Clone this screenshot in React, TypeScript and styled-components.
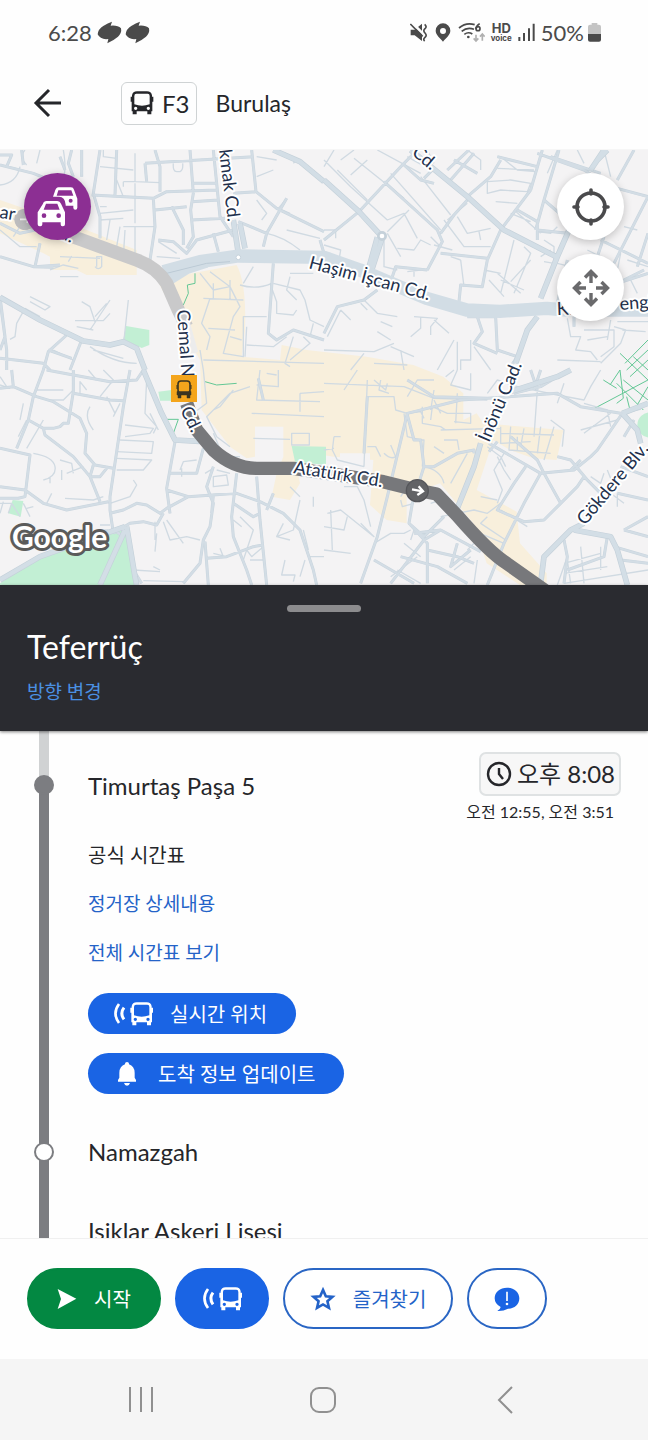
import React from "react";
import styled, { createGlobalStyle } from "styled-components";

const GlobalStyle = createGlobalStyle`
  * { box-sizing: border-box; }
  body { margin: 0; background: #fefefe; }
  button { font-family: inherit; cursor: pointer; }
`;

const blue = "#1a64e4";
const ink = "#25262a";
const rail = "#7c7d81";

const Screen = styled.div`
  display: flex;
  flex-direction: column;
  height: 100vh;
  color: ${ink};
  background: #fefefe;
  font-family: "Lato", "Noto Sans CJK KR", sans-serif;
`;

/* ---------- status bar ---------- */

const StatusBar = styled.div`
  display: flex;
  align-items: center;
  justify-content: space-between;
  flex: none;
  height: 65px;
  padding: 0 47px 0 48px;
  color: #4b4b4b;
  font-size: 22px;
  line-height: 28px;
`;

const StatusGroup = styled.div<{ $gap: number }>`
  display: flex;
  align-items: center;
  gap: ${(p) => p.$gap}px;
`;

const Battery = styled.span`
  display: flex;
  align-items: center;
  gap: 4px;
`;

const HdVoice = styled.span`
  display: flex;
  flex-direction: column;
  align-items: center;
  font-family: "Inter", sans-serif;
  font-weight: 700;
  font-size: 13px;
  line-height: 11px;
  small {
    font-size: 8px;
    line-height: 8px;
  }
`;

/* ---------- app bar ---------- */

const AppBar = styled.header`
  display: flex;
  align-items: center;
  flex: none;
  height: 85px;
  padding: 0 33px 8px;
  border-bottom: 1px solid #f6f6f6;
`;

const IconButton = styled.button`
  display: flex;
  padding: 0;
  border: 0;
  color: ${ink};
  background: none;
`;

const LineBadge = styled.span`
  display: flex;
  align-items: center;
  gap: 7px;
  height: 43px;
  margin: 0 19px 0 58px;
  padding: 0 6px 0 7px;
  border: 1px solid #cfd3d4;
  border-radius: 6px;
  font-size: 24px;
`;

const Operator = styled.h1`
  margin: 0;
  font-size: 23px;
  font-weight: 400;
  line-height: 28px;
`;

/* ---------- map ---------- */

const MapArea = styled.section`
  position: relative;
  flex: none;
  height: 435px;
  overflow: hidden;
  background: #f4f3f4;
`;

const MapDrawing = styled.svg`
  display: block;
  width: 100%;
  height: 100%;
`;

const MapButton = styled.button<{ $dark?: boolean }>`
  display: flex;
  align-items: center;
  justify-content: center;
  width: 67px;
  height: 67px;
  padding: 0;
  border: 0;
  border-radius: 50%;
  color: ${(p) => (p.$dark ? "#ffffff" : "#4a4a4c")};
  background: ${(p) => (p.$dark ? "#8c2f93" : "#ffffff")};
  box-shadow: 0 2px 8px rgba(0, 0, 0, 0.22);
`;

const MapControls = styled.div<{ $side: "left" | "right" }>`
  position: absolute;
  top: 23px;
  ${(p) => p.$side}: 24px;
  display: flex;
  flex-direction: column;
  gap: 14px;
`;

const MapLabel = styled.text`
  font-size: 18px;
  fill: #22304c;
  stroke: #ffffff;
  stroke-width: 4px;
  stroke-linejoin: round;
  paint-order: stroke;
`;

const Attribution = styled.text`
  font-size: 30px;
  font-weight: 700;
  fill: #ffffff;
  stroke: #5b5b5b;
  stroke-width: 6px;
  stroke-linejoin: round;
  paint-order: stroke;
`;

/* ---------- direction panel ---------- */

const DirectionPanel = styled.section`
  position: relative;
  z-index: 1;
  display: flex;
  flex-direction: column;
  align-items: flex-start;
  flex: none;
  height: 146px;
  padding: 20px 27px 0;
  background: #2a2b30;
  box-shadow: 0 1px 3px rgba(0, 0, 0, 0.5);
`;

const Handle = styled.div`
  align-self: center;
  width: 74px;
  height: 7px;
  border-radius: 4px;
  background: #8c8c8e;
`;

const Direction = styled.h2`
  margin: 17px 0 0;
  color: #ffffff;
  font-size: 32px;
  font-weight: 400;
  line-height: 36px;
`;

const TextLink = styled.a<{ $light?: boolean }>`
  color: ${(p) => (p.$light ? "#4a90e2" : "#2463c8")};
  font-size: 19px;
  line-height: 28px;
  text-decoration: none;
`;

const DirectionLink = styled(TextLink)`
  margin-top: 13px;
`;

/* ---------- stops ---------- */

const StopList = styled.ol`
  flex: 1;
  min-height: 0;
  margin: 0;
  padding: 0;
  overflow: auto;
  scrollbar-width: none;
  list-style: none;
`;

const Stop = styled.li`
  display: grid;
  grid-template-columns: 88px 1fr;
`;

const Rail = styled.div`
  display: flex;
  flex-direction: column;
  align-items: center;
`;

const Segment = styled.i<{ $length?: number; $past?: boolean }>`
  flex: ${(p) => (p.$length ? `0 0 ${p.$length}px` : "1")};
  width: 10px;
  background: ${(p) => (p.$past ? "#d0d2d3" : rail)};
`;

const Dot = styled.i<{ $open?: boolean }>`
  z-index: 1;
  flex: none;
  width: 20px;
  height: 20px;
  margin: -2px 0;
  border: 2px solid ${rail};
  border-radius: 50%;
  background: ${(p) => (p.$open ? "#ffffff" : rail)};
`;

const StopBody = styled.div<{ $open?: boolean }>`
  display: flex;
  flex-direction: column;
  align-items: flex-start;
  min-height: 79px;
  padding: ${(p) => (p.$open ? "21px 27px 19px 0" : "25px 27px 24px 0")};
`;

const StopHeader = styled.div`
  display: flex;
  justify-content: space-between;
  align-self: stretch;
`;

const StopName = styled.h3<{ $open?: boolean }>`
  margin: ${(p) => (p.$open ? "20px 0 0" : "0")};
  font-size: 24px;
  font-weight: 400;
  line-height: 28px;
`;

const Times = styled.div`
  display: flex;
  flex-direction: column;
  align-items: flex-end;
`;

const NextTime = styled.time`
  display: flex;
  align-items: center;
  gap: 5px;
  height: 44px;
  padding: 0 4px 0 5px;
  border: 2px solid #dfe2e3;
  border-radius: 7px;
  background: #f7f7f7;
  font-size: 24px;
  line-height: 36px;
`;

const LaterTimes = styled.span`
  padding-right: 7px;
  font-size: 16px;
  line-height: 31px;
`;

const StopLinks = styled.div`
  display: flex;
  flex-direction: column;
  gap: 21px;
  margin: 14px 0 26px;
  font-size: 20px;
  line-height: 28px;
`;

const Pill = styled.button`
  display: flex;
  align-items: center;
  gap: 16px;
  height: 41px;
  padding: 0 29px 0 24px;
  border: 0;
  border-radius: 21px;
  color: #ffffff;
  background: ${blue};
  font-size: 20px;
  line-height: 28px;

  & + & {
    margin-top: 19px;
  }
`;

/* ---------- action bar ---------- */

const ActionBar = styled.footer`
  display: flex;
  gap: 14px;
  flex: none;
  padding: 29px 27px 30px;
  border-top: 1px solid #f0f0f0;
  background: #fefefe;
`;

const Action = styled.button<{ $tone: "go" | "solid" | "outline"; $pad: number }>`
  display: flex;
  align-items: center;
  gap: 17px;
  height: 61px;
  padding: 0 ${(p) => p.$pad}px;
  border: 2px solid ${(p) => (p.$tone === "go" ? "#038842" : p.$tone === "solid" ? blue : "#2a66c4")};
  border-radius: 31px;
  color: ${(p) => (p.$tone === "outline" ? "#2463c8" : "#ffffff")};
  background: ${(p) => (p.$tone === "go" ? "#038842" : p.$tone === "solid" ? blue : "#ffffff")};
  font-size: 20px;
  line-height: 28px;
`;

const SystemNav = styled.nav`
  display: grid;
  grid-template-columns: repeat(3, 1fr);
  flex: none;
  height: 81px;
  padding: 0 52px 0 50px;
  background: #f5f5f5;
`;

const NavButton = styled.button`
  display: flex;
  align-items: center;
  justify-content: center;
  padding: 0;
  border: 0;
  color: #909090;
  background: none;
`;

/* ---------- icons ---------- */

const busShape =
  "M24 4H54Q67 4 69 16V20H73V35H70V64H67V73H55V64H23V73H11V64H8V35H5V20H9V16Q11 4 24 4ZM22 11Q16 11 16 18V43Q39 51 62 43V18Q62 11 56 11ZM20 50A5 5 0 1 0 20 60A5 5 0 1 0 20 50ZM58 50A5 5 0 1 0 58 60A5 5 0 1 0 58 50Z";

const BusIcon = () => (
  <svg width="26" height="26" viewBox="0 0 78 78" fill="currentColor" aria-hidden="true">
    <path fillRule="evenodd" d={busShape} />
  </svg>
);

const LiveBusIcon = () => (
  <svg width="42" height="26" viewBox="0 0 126 78" aria-hidden="true">
    <g fill="none" stroke="currentColor">
      <path d="M21 9Q0 37 21 66" strokeWidth="8" />
      <path d="M36 20Q23 37 36 55" strokeWidth="9" />
    </g>
    <path transform="translate(50 0)" fillRule="evenodd" fill="currentColor" d={busShape} />
  </svg>
);

const BellIcon = () => (
  <svg width="30" height="26" viewBox="-3 0 90 78" fill="currentColor" aria-hidden="true">
    <path d="M36 8Q36 3 42 3T48 8V10Q64 15 65 35V50L69 57V62H15V57L19 50V35Q20 15 36 10Z" />
    <path d="M33 66H51Q49 74 42 74T33 66Z" />
  </svg>
);

const LeafIcon = () => (
  <svg width="25" height="24" viewBox="0 0 75 72" fill="#4a4a4a" aria-hidden="true">
    <path d="M2 40Q3 24 20 14Q32 7 45 2L41 14Q62 12 72 22Q75 36 63 47Q50 58 31 67L34 54Q10 57 2 40Z" />
  </svg>
);

const CarsIcon = () => (
  <svg width="42" height="42" viewBox="0 0 126 126" aria-hidden="true">
    <g fill="currentColor">
      <path fillRule="evenodd" d="M53 18Q56 4 65 4H102Q109 4 111 11L121 38V65Q121 71 115 71T109 65V59H86V56Q84 42 80 38Q75 32 66 32H48ZM64 13L59 29H109L103 13ZM101 38A6 6 0 1 0 101 50A6 6 0 1 0 101 38Z" />
      <path fillRule="evenodd" d="M18 53Q20 45 29 45H61Q69 45 72 53L84 79V115Q84 121 78 121H76Q71 121 71 115V109H16V115Q16 121 10 121H8Q2 121 2 115V79ZM27 53L20 71H68L61 53ZM21 82A7 7 0 1 0 21 96A7 7 0 1 0 21 82ZM65 82A7 7 0 1 0 65 96A7 7 0 1 0 65 82Z" />
    </g>
  </svg>
);

/* ---------- map data, drawn on a grid three times finer than the view ---------- */

type Roads = { x: number; y: number; thin: string; mid: string; wide: string };

const quarters: Roads[] = [
  {
    x: 0,
    y: 0,
    thin:
      "M60 50Q50 100 0 105M75 0Q55 20 80 45M120 0L110 40M190 0Q200 60 190 80M310 0V20L350 25M300 50L400 60M350 90L370 140M405 10V95L480 98M370 95H405M370 95V110M520 40Q518 65 530 65H540Q550 60 548 40M405 100V220M300 190L400 180M300 170H320M300 210L370 205M330 210L320 270M370 230L465 230M405 230V320M360 230L350 290M375 240L370 320M475 275L530 310M470 320L540 325M770 20L830 30M820 60L770 80M890 30L880 40M770 150L800 190L785 210M835 175L870 190M860 145L835 175M800 250Q850 260 900 300M860 240L960 265M0 190L60 215M0 240L60 290L110 290M60 230L40 260M180 320L300 325M150 360L190 345L235 355M180 380H235M290 350V320H305V350Q295 362 285 350M215 318L205 335M90 440L150 470L135 480L90 455M245 455L270 470L285 515M225 512H310L330 490M330 450L270 540M285 500L320 460M230 530L280 540M385 450L372 570M75 475L50 520L45 560L30 568M120 500L75 475M150 520L190 550M600 370L640 420L690 410L630 365M640 400V445M690 390V450M610 445L730 450M630 445L605 520L630 560L620 600M690 410L720 470L700 500L670 610L730 620V500H800M625 535L705 540M690 560L725 570M610 630L972 640M600 600L610 660M720 405Q770 420 815 400M760 350L730 400M820 400L900 420L915 450L930 510L972 530M870 380L860 420L890 450M870 370L940 370M810 400L830 455V490L880 495L890 480M940 520L930 560M740 585L820 590L860 560M740 530L735 620M880 560L855 640L870 650M910 560L930 580L870 630M270 590Q340 640 410 640M280 600L370 625M160 600L220 630",
    mid:
      "M0 45L100 70L150 90L215 120M20 50L35 15H0M215 0L205 40L220 80M65 0L70 45M180 20L195 60M245 0V80M300 0L280 130L300 200V265M350 0L345 135M465 0L480 50V125M435 40L760 20M435 40L440 95M275 135L460 145L500 125L650 120M460 145L465 230L450 330M570 0L580 130L572 180L580 260L560 295M580 100H650M575 155L655 150M575 210L675 205M640 0L660 200L700 260M465 180L560 170M515 170L550 240V285M475 270L520 275L560 310L590 270L700 240M640 250L655 305M755 0L768 125L830 175L972 245M860 145L800 250L790 290M715 215L800 250M700 130L768 125M0 220L60 250L130 235M0 320L100 350L160 352M120 280L105 350L180 345M0 440L15 560L0 600M0 450L20 600V660M820 340L805 550L830 570L880 540L972 570M200 555L145 605L130 660M245 570L210 660M145 600L215 625M0 625L130 640L150 660M960 270L972 310",
    wide: "M0 442L120 510L250 573L330 585L370 575L410 595L435 660M820 0L900 35L972 95M700 210L715 310M720 220L735 295",
  },
  {
    x: 972,
    y: 0,
    thin:
      "M30 0L0 50M90 25L240 145M130 30L80 75M160 0L290 70M0 30L80 110L190 210M40 60L130 150M250 20L320 60M190 210L240 190L280 265M290 80L380 195M255 180L190 245M200 70L350 240M430 160L370 210M400 200L430 250L500 235M465 245L470 270M360 210L420 290L500 290M330 285L385 300M430 0L470 30V60M310 0L330 40M190 250L230 320M180 265V350L220 360M220 295L270 300L290 270L320 285M0 285L50 300L45 330M0 310H20M0 240H35V265M50 30L90 0M530 20L580 60L635 65M520 55L630 60M490 95L560 90L620 100L610 125L530 120L490 130ZM515 155L580 160M570 180L650 250M560 190L620 215M640 245L680 250L700 230M660 270L690 290V340L660 335M680 300L650 320M570 270L530 430M600 290L620 310L570 430M520 370L590 430M495 390L540 440M530 390L600 420M480 360L530 370M620 330L560 395M700 0L670 70M760 0L780 40M840 0L860 80M700 340L740 350M790 300L830 320M900 230L940 240M890 310L880 360M910 330L972 350M920 390L940 430M250 365L290 360M270 365V380M320 260L350 290M410 330L420 410M380 320L410 330M10 560L50 480M50 480L80 510M120 450L160 490L220 500M130 480L110 460M170 515L205 530M160 545L200 570M0 600L150 605L210 580M200 590L270 620M230 600L240 660M150 640L250 645M80 660L120 610M290 500V535L260 560M270 500L340 505L320 530V555M330 510L375 550M390 570L340 660M400 575V660M440 570V630H410V660M450 590L500 660M730 505L740 560H770L755 600L800 605L820 630M780 540H870V590L830 620M860 510L850 570M790 570L850 560M880 515H972M870 530L905 540L890 580L830 640M895 540L965 545M700 630L830 635",
    mid:
      "M0 270L105 185L235 45L280 0M180 95L340 240L355 275L310 360M330 100L290 90L240 45M300 85L330 55M380 90L450 10M390 30L460 70M530 30L500 80L430 140M430 150L390 195L350 250M435 0L370 60M620 120L655 0M705 0L660 150L635 240M620 120L530 240L490 330L475 410L410 405L405 455M350 310L490 325M205 380L215 350L310 360M660 150L730 210M580 180L640 215V270M640 10L780 60M780 60L860 110L972 140M930 0L880 90M972 140L870 340M972 250L940 350M830 270L972 340M820 320L840 260M640 240L730 250M680 20L830 70M0 550L40 470L120 450L160 420M520 20L640 50M880 400L972 370M700 460L730 330M960 360L880 400M515 500L520 600L580 620L560 650M460 500L475 545L450 580L520 610M430 500L515 500M750 500V530",
    wide: "M0 90L105 185L172 258M260 0L430 140L540 240L700 322M840 0L800 60M735 240L700 320L650 445M175 262L140 370M160 262L130 370M640 500L610 540L575 640M850 0L820 30",
  },
  {
    x: 0,
    y: 660,
    thin:
      "M70 100L60 150M55 200L80 150M130 150L80 235M100 250Q160 260 165 290T130 330M180 270L215 280L220 310M185 300V330M150 340V320M220 60L190 90L145 90M110 60H190M240 70V35L260 60M310 0L340 30L300 80M265 0L290 30M270 110Q250 140 280 180M320 80L345 130M360 100L340 140M440 30L435 130L470 170L460 190M450 130L475 180M375 165L460 175L450 190L375 200M360 210L460 215L455 250L350 245M350 265L455 270L430 300H350M400 330L410 345L390 380L330 400M250 290L200 310M195 385L280 390L310 380M155 370L140 400M70 400L90 440M80 415L100 410M35 400L60 440M300 465H330M300 480H325M470 490L465 545M465 455V510M490 455L510 510L560 500L600 510M500 450L550 520M540 300L550 275L590 270M545 295V320M640 320L680 315L685 345L640 350ZM650 300L690 310M615 310L640 295M460 590L480 600M400 600L480 605M430 632L550 635M610 0L620 100L580 130M750 50L690 70L620 140L650 200L690 230M700 60L660 110L640 120M640 190L670 260L720 260M760 205L870 208M875 190H928V225H875ZM755 130L972 140M900 70V125M900 70L972 65M770 45L835 50V0M800 10L830 15M780 0L770 90L960 95M870 350L900 380M900 390L880 480L830 500L870 510M830 500L850 460M910 480L925 540M700 450L725 470M720 440L760 480L730 570M740 540L755 560L790 530M750 570H790M660 535L670 560M640 550L680 560M855 570L845 615H885L880 635M915 570L900 620M940 380V410M930 560H972M0 45L30 55M0 20L20 50M10 395L0 430M25 430L35 400H0",
    mid:
      "M130 0L100 80L85 150L50 235M35 0L40 50M0 55L40 50L110 80L160 95L240 145L260 190L255 250L285 285L340 295M140 0L220 15L330 35L410 30L430 0M220 0V70L330 90L370 92M220 65L205 160H190L180 170L160 175L130 175L85 150M130 175L135 195L220 260L270 320L300 395M280 285L270 320L300 320L320 295M0 235L90 255L75 380L55 385H0M0 350L75 360L130 400L200 420L325 395M390 0L370 110L330 380V420L340 490M500 360L565 380L710 370L780 395L850 430L900 480L940 600L950 645M330 430L370 420L410 400L440 405L480 430L500 415L565 380M340 490L390 460L430 455L470 465L490 430M525 215L500 355L510 430M610 235L590 310H510M640 290L620 350L640 400L630 470L610 510L600 580L550 640M710 310L695 440L700 500L740 600L755 645M700 400L760 440L780 430M770 320L780 450L800 645M640 375L635 430M615 515L625 645M620 565L680 560L760 530L790 525M775 25L790 90M400 600L425 640M335 475L370 500M820 370L800 420",
    wide: "M430 0L485 130L525 210L610 215M375 480L300 645M0 630L120 560L375 470M380 470L405 620L410 645",
  },
  {
    x: 972,
    y: 660,
    thin:
      "M0 40L240 50L330 85L490 90M100 0L60 60M130 30L120 290M190 40L185 60L150 30M170 30L165 60L195 70M130 80H210L215 120L250 130M330 60L320 120M320 150L325 110L370 130H440V160L390 155M330 90L350 130M365 20L390 0M400 0L380 45L440 60V10M490 70L520 30L580 50L700 75L780 90L800 50L830 0M720 40L700 100M640 60L630 200M330 30H280L250 80M250 130L290 125L300 145M295 110V160L350 170L365 180M350 180L530 175M400 70L395 160M270 210H300L295 290M290 210L250 200L240 130M330 230L360 250M360 210H400L405 240M30 200L25 240L40 270L120 290M50 200H30M0 240L30 235M130 230H155L170 260M180 250Q200 270 215 260L200 225M300 290Q350 300 360 340M380 340L430 250M60 350L100 350L120 390L140 470M10 430L50 420L150 500L110 460M20 420L25 540M0 540L80 550M70 440L60 480L0 470M150 520L200 490L240 490L260 480M230 390L235 410L270 400M250 350L230 380M320 400L350 390M350 440L450 420L490 430L530 400M520 260L540 300L560 330M540 250L510 300L535 360L520 400M490 230L530 260L545 290M530 170V220L620 215M560 170L555 240L680 250M600 175L590 230M530 190L690 195M650 170L640 250M690 170L660 270M580 200L580 240M680 150L720 180L715 230M530 420L610 470M470 380L520 390M440 560L390 600M460 570L450 640M420 470L540 520M450 520L430 540M720 580L830 550M720 610L850 590M730 560L700 645M770 530L780 640M720 640L972 600M830 530V600M780 190L860 130M770 180L880 150M780 100L850 120L860 170M840 310L830 340L800 320M880 370V410M860 370L900 400M850 300L870 350M720 500L740 640M490 440L470 460L545 510M240 520L290 560M270 480L260 510M220 600L290 640M200 620L280 560",
    mid:
      "M130 80L120 250M250 30L330 80L490 85L700 70L770 110L890 130L950 115M490 85L410 90L250 130L190 380L160 500L110 640M300 290H330L400 250L450 240L450 250M250 135L270 210H290L300 290M300 290L265 400L255 460L310 520V640M255 460L300 500L360 440M270 490L350 480L470 545M350 480L300 510L200 640M150 570L270 640M230 560L340 590L430 640M310 540L400 560L450 580M400 520L380 590L440 540M560 200L640 270L660 310L710 400L760 350L780 320L830 370M495 220L650 310L750 300L800 260L820 240L895 130M650 310L600 400L540 520L490 645M605 290L570 340L520 420L600 455L660 450L710 400M700 260L740 270L790 330M520 215L495 245M770 270L740 300M650 0L630 60M620 0L640 60M570 70L650 50L700 20M900 200L930 150M720 510L730 560L720 640M850 500L840 560L730 600M780 490L770 480M890 290L972 320M880 370L972 390M900 480L972 500M900 480L972 440M870 530L972 560M890 570L972 580",
    wide: "M470 220L450 290L390 440M650 640L660 560L740 480L780 460M750 480L860 500L880 540L910 645M895 130L940 180L950 220M560 65L700 20L740 0M895 130L972 100",
  },
];

const labels: { text: string; x: number; y: number; turn: number }[] = [
  { text: "kmak Cd.", x: 219, y: 0, turn: 83 },
  { text: "Cd.", x: 411, y: 4, turn: 40 },
  { text: "nar", x: -11, y: 66, turn: 10 },
  { text: "d.", x: 58, y: 87, turn: 25 },
  { text: "Haşim İşcan Cd.", x: 308, y: 118, turn: 15 },
  { text: "Cemal Na", x: 177, y: 160, turn: 86 },
  { text: "Kıbrıs", x: 557, y: 165, turn: -2 },
  { text: "engi", x: 620, y: 160, turn: -4 },
  { text: "Cd.", x: 180, y: 260, turn: 64 },
  { text: "Atatürk Cd.", x: 293, y: 323, turn: 9 },
  { text: "İnönü Cad.", x: 489, y: 293, turn: -67 },
  { text: "Gökdere Blv.", x: 585, y: 376, turn: -50 },
];

const TransitMap = () => (
  <MapDrawing viewBox="0 0 648 435" preserveAspectRatio="xMidYMid slice" role="img" aria-label="Burulaş F3">
    <g transform="scale(0.33333)">
      <g fill="#f8efdc">
        <path d="M0 150L260 240L410 300V375H260L130 310L0 250Z" />
        <path d="M440 330L520 380L710 345Q740 400 735 540L725 620L840 630L845 585L920 600L1100 620L1240 645L1330 680L1390 730V810L1430 790L1450 820L1690 840L1670 930L1600 925L1530 900L1480 870L1430 1020L1550 1085L1560 1180L1640 1270V1305H1560L1460 1240L1420 1120L1320 1000L1220 1035V1120L1160 1110L1110 1065L1120 930L1000 920L880 900L900 1000L870 1050L815 1040L830 970L850 920V830H765V920L740 925L690 890L605 780L600 630L560 560Z" />
        <path d="M150 290H300V360H150Z" />
      </g>
      <g fill="#f4f3f4">
        <path d="M765 830H815V925H765ZM1020 910H1110V1010H1020Z" />
      </g>
      <g fill="#c2efd4">
        <path d="M378 528L448 540V585L425 594L370 568Z" />
        <path d="M475 725L515 720L535 752H480Z" />
        <path d="M875 888L978 890V945L885 935Z" />
        <path d="M38 1050L70 1053L62 1100L25 1090Z" />
        <path d="M0 1300L120 1222L375 1135L410 1305H0Z" />
        <circle cx="1950" cy="825" r="38" />
      </g>
      <g fill="none" stroke="#62c795" strokeWidth="3">
        <path d="M585 370V400L562 405L565 430L550 465M615 695L650 705L710 700M500 808H535L520 850" />
        <path d="M1860 610L1944 690M1875 640L1944 570M1880 660L1944 600M1890 680L1944 630M1900 620L1944 660M1780 777L1944 690M1810 690L1850 715M1860 660L1830 705M1850 700L1930 780M1870 690L1944 750M1890 780L1880 740M1850 760L1870 745L1860 660M1900 785L1944 710" />
      </g>
      {quarters.map((q) => (
        <g key={`${q.x}-${q.y}`} transform={`translate(${q.x} ${q.y})`} fill="none" strokeLinejoin="round">
          <path d={q.thin} stroke="#d0dae2" strokeWidth="4" />
          <path d={q.mid} stroke="#c9d5de" strokeWidth="9" />
          <path d={q.mid} stroke="#d3dde5" strokeWidth="6" />
          <path d={q.wide} stroke="#c5d1da" strokeWidth="17" />
          <path d={q.wide} stroke="#d3dee6" strokeWidth="13" />
        </g>
      ))}
      <g fill="none" stroke="#d2dde5" strokeLinejoin="round">
        <path d="M490 365L600 335L715 318L972 322L1080 360L1280 445L1400 480L1500 484L1640 475L1700 480H1944" strokeWidth="40" />
        <path d="M505 395L560 360L620 340" strokeWidth="26" />
      </g>
      <path d="M500 370L620 340L690 335" fill="none" stroke="#bccad5" strokeWidth="3" />
      <circle cx="715" cy="322" r="7" fill="#fff" stroke="#c5d1da" strokeWidth="3" />
      <circle cx="1146" cy="258" r="11" fill="#fff" stroke="#c5d1da" strokeWidth="8" />
      <g fill="none" strokeLinejoin="round">
        <path d="M60 205L240 268L410 330Q470 352 500 400L535 480L560 530" stroke="#c9c9ca" strokeWidth="40" />
        <path d="M555 520L580 610" stroke="#ececec" strokeWidth="30" />
        <path d="M560 760L590 840L640 900Q700 955 770 955H880L1150 995L1250 1020L1310 1032L1370 1095Q1470 1210 1520 1240L1640 1325" stroke="#77787b" strokeWidth="40" />
      </g>
      <circle cx="75" cy="208" r="32" fill="#bcbcbd" />
      <path d="M60 208H90M80 198L90 208L80 218" fill="none" stroke="#eee" strokeWidth="5" />
      <circle cx="1252" cy="1022" r="33" fill="#626366" stroke="#55565a" strokeWidth="4" />
      <path d="M1236 1018L1268 1024M1256 1009L1269 1024L1252 1035" fill="none" stroke="#fff" strokeWidth="7" />
    </g>
    {labels.map((l, i) => (
      <MapLabel key={i} transform={`translate(${l.x} ${l.y}) rotate(${l.turn})`}>
        {l.text}
      </MapLabel>
    ))}
    <rect x="171" y="225" width="26" height="27" fill="#f4a51c" />
    <g transform="translate(176 229)" fill="none" stroke="#3a3421">
      <rect x="2" y="2" width="12" height="12" rx="3" strokeWidth="1.6" />
      <path d="M1 12.5H15V16H1ZM2 16V19H5V16ZM11 16V19H14V16Z" fill="#3a3421" strokeWidth="0.5" />
      <path d="M1 6V10M15 6V10" strokeWidth="1" />
    </g>
    <Attribution x="12" y="398">Google</Attribution>
  </MapDrawing>
);

export default function App() {
  return (
    <Screen>
      <GlobalStyle />
      <StatusBar>
        <StatusGroup $gap={5}>
          <span>6:28</span>
          <StatusGroup $gap={3}>
            <LeafIcon />
            <LeafIcon />
          </StatusGroup>
        </StatusGroup>
        <StatusGroup $gap={6}>
          <svg width="18" height="19" viewBox="0 0 54 57" aria-hidden="true">
            <path d="M2 20H14L36 2V54L14 37H2Z" fill="#4a4a4a" />
            <path d="M3 -4L44 37" stroke="#fefefe" strokeWidth="8" />
            <path d="M1 3L38 40" stroke="#4a4a4a" strokeWidth="5" />
            <path d="M44 4Q52 11 45 17T45 30T45 43T44 54" stroke="#4a4a4a" strokeWidth="5" fill="none" />
          </svg>
          <svg width="18" height="19" viewBox="0 0 54 57" aria-hidden="true">
            <path fillRule="evenodd" d="M27 1A22 22 0 0 1 49 23C49 36 36 44 27 56C18 44 5 36 5 23A22 22 0 0 1 27 1ZM27 15A9 9 0 1 0 27 33A9 9 0 1 0 27 15Z" fill="#4a4a4a" />
          </svg>
          <svg width="27" height="21" viewBox="0 0 81 63" aria-hidden="true">
            <g fill="none" stroke="#4a4a4a" strokeWidth="5">
              <path d="M3 18Q24 0 50 8" />
              <path d="M11 28Q28 14 48 22" />
              <path d="M19 37Q31 28 43 36" />
              <path d="M65 5Q54 12 54 21" />
              <circle cx="60" cy="20" r="6" />
            </g>
            <circle cx="31" cy="45" r="4" fill="#4a4a4a" />
            <path d="M54 38V56M47 49L54 57L61 49M73 56V37M66 44L73 36L80 44" fill="none" stroke="#b0b0b0" strokeWidth="5" />
          </svg>
          <HdVoice>
            HD<small>voice</small>
          </HdVoice>
          <svg width="17" height="19" viewBox="0 0 51 57" aria-hidden="true">
            <path d="M4 42V54M18 30V54M33 16V54M47 2V54" stroke="#4a4a4a" strokeWidth="6" />
          </svg>
          <Battery>
            50%
            <svg width="13" height="19" viewBox="0 0 39 57" aria-hidden="true">
              <path d="M11 0H28V5H33Q39 5 39 11V34H0V11Q0 5 6 5H11Z" fill="#c4c4c4" />
              <path d="M0 33H39V50Q39 56 33 56H6Q0 56 0 50Z" fill="#4a4a4a" />
            </svg>
          </Battery>
        </StatusGroup>
      </StatusBar>

      <AppBar>
        <IconButton aria-label="뒤로">
          <svg width="30" height="30" viewBox="0 0 30 30" fill="none" stroke="currentColor" strokeWidth="3" aria-hidden="true">
            <path d="M16 2L3 15L16 28M3 15H28" />
          </svg>
        </IconButton>
        <LineBadge>
          <BusIcon />
          F3
        </LineBadge>
        <Operator>Burulaş</Operator>
      </AppBar>

      <MapArea>
        <TransitMap />
        <MapControls $side="left">
          <MapButton $dark aria-label="교통정보">
            <CarsIcon />
          </MapButton>
        </MapControls>
        <MapControls $side="right">
          <MapButton aria-label="내 위치">
            <svg width="38" height="38" viewBox="0 0 38 38" fill="none" stroke="currentColor" strokeWidth="3.6" aria-hidden="true">
              <circle cx="19" cy="19" r="14" />
              <path d="M19 2V6M19 32V36M2 19H6M32 19H36" strokeLinecap="round" />
            </svg>
          </MapButton>
          <MapButton aria-label="지도 이동">
            <svg width="38" height="38" viewBox="0 0 38 38" fill="none" stroke="#6a6a6c" strokeWidth="3.4" aria-hidden="true">
              <path d="M19 14V3M13 8.5L19 2.5L25 8.5M19 24V35M13 29.5L19 35.5L25 29.5M14 19H3M8.5 13L2.5 19L8.5 25M24 19H35M29.5 13L35.5 19L29.5 25" />
            </svg>
          </MapButton>
        </MapControls>
      </MapArea>

      <DirectionPanel>
        <Handle />
        <Direction>Teferrüç</Direction>
        <DirectionLink $light href="#direction">방향 변경</DirectionLink>
      </DirectionPanel>

      <StopList>
        <Stop>
          <Rail>
            <Segment $length={46} $past />
            <Dot />
            <Segment />
          </Rail>
          <StopBody $open>
            <StopHeader>
              <StopName $open>Timurtaş Paşa 5</StopName>
              <Times>
                <NextTime>
                  <svg width="26" height="26" viewBox="0 0 26 26" fill="none" stroke="currentColor" aria-hidden="true">
                    <circle cx="13" cy="13" r="11" strokeWidth="2.4" />
                    <path d="M13 7V13L17 18" strokeWidth="2.4" />
                  </svg>
                  오후 8:08
                </NextTime>
                <LaterTimes>오전 12:55, 오전 3:51</LaterTimes>
              </Times>
            </StopHeader>
            <StopLinks>
              <span>공식 시간표</span>
              <TextLink href="#stop">정거장 상세내용</TextLink>
              <TextLink href="#timetable">전체 시간표 보기</TextLink>
            </StopLinks>
            <Pill>
              <LiveBusIcon />
              실시간 위치
            </Pill>
            <Pill>
              <BellIcon />
              도착 정보 업데이트
            </Pill>
          </StopBody>
        </Stop>
        <Stop>
          <Rail>
            <Segment $length={31} />
            <Dot $open />
            <Segment />
          </Rail>
          <StopBody>
            <StopName>Namazgah</StopName>
          </StopBody>
        </Stop>
        <Stop>
          <Rail>
            <Segment />
          </Rail>
          <StopBody>
            <StopName>Isiklar Askeri Lisesi</StopName>
          </StopBody>
        </Stop>
      </StopList>

      <ActionBar>
        <Action $tone="go" $pad={28}>
          <svg width="20" height="20" viewBox="0 0 60 60" fill="currentColor" aria-hidden="true">
            <path d="M2 0L58 29L2 60L12 30Z" />
          </svg>
          시작
        </Action>
        <Action $tone="solid" $pad={24} aria-label="실시간 위치">
          <LiveBusIcon />
        </Action>
        <Action $tone="outline" $pad={25}>
          <svg width="26" height="26" viewBox="0 0 24 24" fill="none" stroke="currentColor" strokeWidth="2.4" aria-hidden="true">
            <path d="M12 3.6L14.6 9.4L20.8 10L16.1 14.1L17.5 20.2L12 17L6.5 20.2L7.9 14.1L3.2 10L9.4 9.4Z" />
          </svg>
          즐겨찾기
        </Action>
        <Action $tone="outline" $pad={25} aria-label="문제 신고">
          <svg width="26" height="26" viewBox="0 0 78 78" aria-hidden="true">
            <path d="M39 5C60 5 76 18 76 37S60 69 42 68Q28 76 10 75Q20 69 20 63Q2 54 2 37C2 18 18 5 39 5Z" fill={blue} />
            <path d="M39 17V45" stroke="#fff" strokeWidth="5" />
            <circle cx="39" cy="54" r="4" fill="#fff" />
          </svg>
        </Action>
      </ActionBar>

      <SystemNav>
        <NavButton aria-label="최근 앱">
          <svg width="26" height="27" viewBox="0 0 26 27" stroke="currentColor" strokeWidth="2" aria-hidden="true">
            <path d="M2 1V26M13 1V26M24 1V26" />
          </svg>
        </NavButton>
        <NavButton aria-label="홈">
          <svg width="28" height="28" viewBox="0 0 28 28" fill="none" stroke="currentColor" strokeWidth="2" aria-hidden="true">
            <rect x="2" y="2" width="24" height="24" rx="8" />
          </svg>
        </NavButton>
        <NavButton aria-label="뒤로 가기">
          <svg width="18" height="28" viewBox="0 0 18 28" fill="none" stroke="currentColor" strokeWidth="2" aria-hidden="true">
            <path d="M16 1L3 14L16 27" />
          </svg>
        </NavButton>
      </SystemNav>
    </Screen>
  );
}
